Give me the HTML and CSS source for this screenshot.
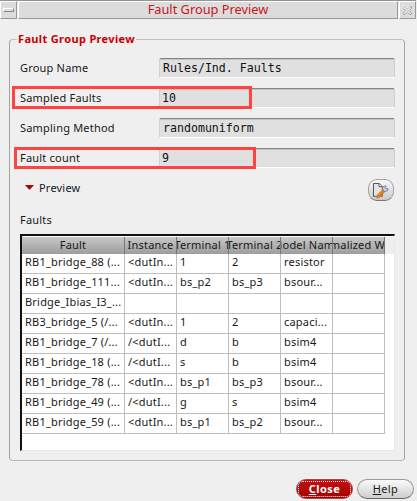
FILE: index.html
```html
<!DOCTYPE html>
<html lang="en">
<head>
<meta charset="utf-8">
<title>Fault Group Preview</title>
<link rel="stylesheet" href="styles.css">
</head>
<body>
<div class="window">
  <header class="titlebar">
    <div class="tb-btn"><span class="minimize"></span></div>
    <h1 class="tb-title">Fault Group Preview</h1>
    <div class="tb-btn">
      <svg width="11" height="11" viewBox="0 0 11 11" fill="none"><path d="M1.5 1.5h2l2 2 2-2h2v2l-2 2 2 2v2h-2l-2-2-2 2h-2v-2l2-2-2-2z" stroke="#999" stroke-dasharray="1.5 1"/><path d="M1 3.5V1h2.5l2 2 2-2" stroke="#fff" stroke-width=".7"/></svg>
    </div>
  </header>
  <main class="group">
    <h2 class="legend">Fault Group Preview</h2>
    <div class="row"><span class="label">Group Name</span><div class="field">Rules/Ind. Faults</div></div>
    <div class="row"><span class="label">Sampled Faults</span><div class="field near">10</div><i class="mark mark-sampled"></i></div>
    <div class="row"><span class="label">Sampling Method</span><div class="field">randomuniform</div></div>
    <div class="row"><span class="label">Fault count</span><div class="field near">9</div><i class="mark mark-count"></i></div>
    <div class="preview">
      <svg class="arrow" width="9" height="5" viewBox="0 0 9 5"><path d="M0 0h9L5 4.5H4z" fill="#b8000a"/></svg>
      <span class="preview-label">Preview</span>
      <button class="tool" aria-label="Edit">
        <svg width="18" height="17" viewBox="0 0 18 17"><path d="M1.500 1.500h5.800l3 3v9.800h-8.800z" fill="#e4e4e4" stroke="#555"/><path d="M7 1.500v3.200h3.300" fill="#fff" stroke="#555"/><path d="M16 6.500a2.700 2.700 0 1 1-1.800-2.300l-1.500 1.600.9 1.200z" fill="#dce6f2" stroke="#6582a6"/><path d="M6 14.500l5-5" stroke="#d97313" stroke-width="3.600" stroke-linecap="round"/><path d="M6 14.500l5-5" stroke="#ffa53c" stroke-width="1.200" stroke-dasharray="1 1"/></svg>
      </button>
    </div>
    <div class="caption">Faults</div>
    <div class="table">
      <div class="tr head"><span>Fault</span><span>Instance</span><span>Terminal 1</span><span>Terminal 2</span><span>Model Name</span><span class="weight">Normalized Weight</span></div>
      <div class="tr"><span>RB1_bridge_88 (...</span><span>&lt;dutIn...</span><span>1</span><span>2</span><span>resistor</span><span></span></div>
      <div class="tr"><span>RB1_bridge_111...</span><span>&lt;dutIn...</span><span>bs_p2</span><span>bs_p3</span><span>bsour...</span><span></span></div>
      <div class="tr"><span>Bridge_Ibias_I3_...</span><span></span><span></span><span></span><span></span><span></span></div>
      <div class="tr"><span>RB3_bridge_5 (/...</span><span>&lt;dutIn...</span><span>1</span><span>2</span><span>capaci...</span><span></span></div>
      <div class="tr"><span>RB1_bridge_7 (/...</span><span>/&lt;dutI...</span><span>d</span><span>b</span><span>bsim4</span><span></span></div>
      <div class="tr"><span>RB1_bridge_18 (...</span><span>/&lt;dutI...</span><span>s</span><span>b</span><span>bsim4</span><span></span></div>
      <div class="tr"><span>RB1_bridge_78 (...</span><span>&lt;dutIn...</span><span>bs_p1</span><span>bs_p3</span><span>bsour...</span><span></span></div>
      <div class="tr"><span>RB1_bridge_49 (...</span><span>/&lt;dutI...</span><span>g</span><span>s</span><span>bsim4</span><span></span></div>
      <div class="tr"><span>RB1_bridge_59 (...</span><span>&lt;dutIn...</span><span>bs_p1</span><span>bs_p2</span><span>bsour...</span><span></span></div>
    </div>
  </main>
  <footer class="actions">
    <button class="btn close"><span><u>C</u>lose</span></button>
    <button class="btn help"><span><u>H</u>elp</span></button>
  </footer>
</div>
</body>
</html>
```

FILE: styles.css
```css
* { box-sizing: border-box; }
body {
  margin: 0;
  width: 417px;
  height: 501px;
  overflow: hidden;
  background: #efefef;
  color: #181818;
  font: 11px/16px "Noto Sans", "Open Sans", sans-serif;
  letter-spacing: .2px;
}
h1, h2 { margin: 0; font-size: inherit; }
.window { width: 416px; height: 501px; display: flex; flex-direction: column; }
.titlebar {
  height: 19px;
  flex: none;
  display: flex;
  gap: 1px;
  border-top: 1px solid #939393;
}
.tb-btn, .tb-title {
  border: 1px solid #999;
  border-top: 1px solid #fff;
  border-left-color: #fff;
  background: #dcdcdc;
  display: flex;
  align-items: center;
  justify-content: center;
}
.tb-btn { width: 17px; }
.tb-title { flex: 1; padding-bottom: 2px; color: #c9141c; font-size: 12.8px; font-weight: 400; letter-spacing: 0; }
.minimize { width: 11px; height: 4px; border: 1px solid #fff; border-right-color: #888; border-bottom-color: #888; }
.group {
  position: relative;
  width: 396px;
  height: 422px;
  flex: none;
  margin: 20px 0 0 9px;
  padding: 18px 9px 0 10px;
  border: 1px solid #a3a3a3;
  border-top-color: #c0c0c0;
  border-bottom-color: #b8b8b8;
  border-radius: 4px;
}
.legend {
  position: absolute;
  left: 7px;
  top: -9px;
  padding: 0 1px;
  background: #efefef;
  color: #c80000;
  font-weight: 700;
  letter-spacing: .35px;
  white-space: nowrap;
}
.row { position: relative; display: flex; align-items: center; height: 20px; margin-bottom: 10px; }
.label { width: 139px; }
.field {
  flex: 1;
  height: 20px;
  padding-left: 3px;
  border: 1px solid #d0d0d0;
  border-top-color: #858585;
  border-bottom-color: #fff;
  border-radius: 2px;
  background: #e0e0e0;
  box-shadow: inset 0 1px #c4c4c4;
  color: #111;
  font: 11.6px/18px "DejaVu Sans Mono", monospace;
  letter-spacing: 0;
}
.near { padding-left: 2px; }
.mark { position: absolute; border: 3px solid #ff4343; height: 23px; }
.mark-sampled { left: -8px; top: -2px; width: 240px; }
.mark-count { left: -6px; top: -1px; width: 242px; height: 22px; }
.preview { display: flex; align-items: center; height: 24px; padding: 0 1px 0 5px; }
.arrow { margin: 0 5px 6px 0; }
.preview-label { padding-bottom: 4px; }
.tool {
  margin-left: auto;
  width: 26px;
  height: 22px;
  padding: 0;
  border: 1px solid #a4a4a4;
  border-bottom-color: #777;
  border-radius: 9px;
  background: linear-gradient(#f8f8f8, #c9c9c9);
  display: flex;
  align-items: center;
  justify-content: center;
}
.caption { height: 32px; padding-top: 10px; }
.table {
  width: 375px;
  height: 217px;
  border: 2px solid #111;
  border-right: 1px solid #e8e8e8;
  border-bottom: 1px solid #e8e8e8;
  background: #fff;
  padding-top: 1px;
}
.tr { display: grid; grid-template-columns: 103px repeat(5, 52px); height: 20px; width: 363px; }
.tr span {
  padding: 0 0 0 3px;
  line-height: 16px;
  border-right: 1px solid #bebebe;
  border-bottom: 1px solid #bebebe;
  white-space: nowrap;
  overflow: hidden;
}
.head { height: 17px; width: 372px; background: #eee; }
.head span {
  display: flex;
  justify-content: center;
  padding: 0;
  line-height: 16px;
  border-bottom: 0;
  border-right: 1px solid #777;
  background: linear-gradient(#c8c8c8, #9d9d9d);
}
.head .weight { padding-left: 5px; }
.actions { display: flex; justify-content: flex-end; gap: 4px; margin-top: 18px; padding-right: 2px; }
.btn {
  position: relative;
  width: 57px;
  height: 20px;
  padding: 0;
  border: 1px solid #999;
  border-bottom-color: #666;
  border-radius: 10px;
  background: linear-gradient(#fafafa, #cecece);
  font: inherit;
  letter-spacing: .4px;
  color: #181818;
}
.close { background: linear-gradient(#c91010, #a00000); border-color: #a44; color: #fff; font-weight: 700; }
.close::after { content: ""; position: absolute; inset: 1px; border: 1px dotted #fff; border-radius: 5px; }
```
